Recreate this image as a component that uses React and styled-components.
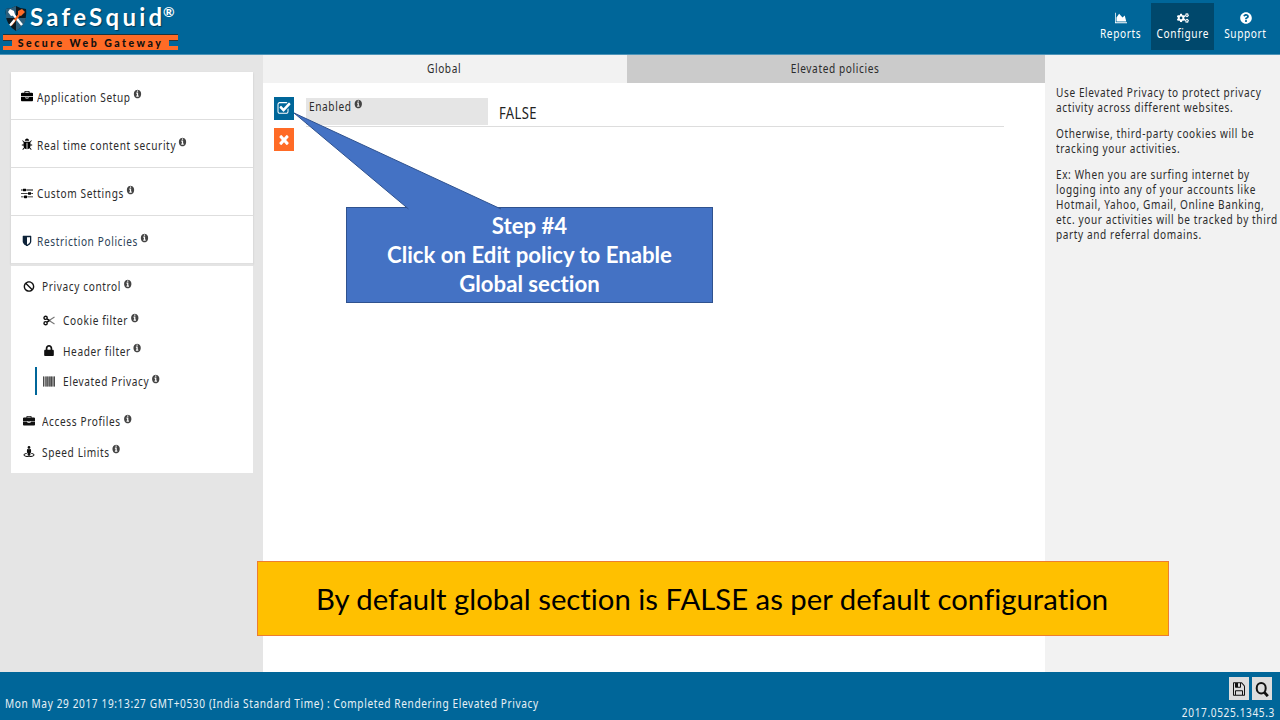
import React from "react";
import styled, { createGlobalStyle } from "styled-components";
import { FaBan, FaCogs, FaLock, FaStreetView, FaQuestionCircle } from "react-icons/fa";

const GlobalStyle = createGlobalStyle`
  * { box-sizing: border-box; }
  body { margin: 0; overflow: hidden; font-family: "Noto Sans", "Open Sans", sans-serif; color: #2b2b2b; }
  p { margin: 0; }
`;

const shapes = {
  area: [2048, "M2048 1536v128h-2048v-1536h128v1408h1920zm-384-1024l256 896h-1664v-576l448-576 576 576z"],
  briefcase: [1792, "M640 256h512v-128h-512v128zm1152 640v480q0 66-47 113t-113 47h-1472q-66 0-113-47t-47-113v-480h672v160q0 26 19 45t45 19h320q26 0 45-19t19-45v-160h672zm-768 0v128h-256v-128h256zm768-480v384h-1792v-384q0-66 47-113t113-47h352v-160q0-40 28-68t68-28h576q40 0 68 28t28 68v160h352q66 0 113 47t47 113z"],
  bug: [1792, "M1696 960q0 26-19 45t-45 19h-224q0 171-67 290l208 209q19 19 19 45t-19 45q-18 19-45 19t-45-19l-198-197q-5 5-15 13t-42 28.5-65 36.5-82 29-97 13v-896h-128v896q-51 0-101.5-13.5t-87-33-66-39-43.5-32.5l-15-14-183 207q-20 21-48 21-24 0-43-16-19-18-20.5-44.5t15.5-46.5l202-227q-58-114-58-274h-224q-26 0-45-19t-19-45 19-45 45-19h224v-294l-173-173q-19-19-19-45t19-45 45-19 45 19l173 173h844l173-173q19-19 45-19t45 19 19 45-19 45l-173 173v294h224q26 0 45 19t19 45zm-480-576h-640q0-133 93.5-226.5t226.5-93.5 226.5 93.5 93.5 226.5z"],
  sliders: [1536, "M352 1408v128h-352v-128h352zm352-128q26 0 45 19t19 45v256q0 26-19 45t-45 19h-256q-26 0-45-19t-19-45v-256q0-26 19-45t45-19h256zm160-384v128h-864v-128h864zm-640-512v128h-224v-128h224zm1312 1024v128h-736v-128h736zm-960-1152q26 0 45 19t19 45v256q0 26-19 45t-45 19h-256q-26 0-45-19t-19-45v-256q0-26 19-45t45-19h256zm640 512q26 0 45 19t19 45v256q0 26-19 45t-45 19h-256q-26 0-45-19t-19-45v-256q0-26 19-45t45-19h256zm320 128v128h-224v-128h224zm0-512v128h-864v-128h864z"],
  shield: [1792, "M1344 960v-640h-448v1137q119-63 213-137 235-184 235-360zm192-768v768q0 86-33.5 170.5t-83 150-118 127.5-126.5 103-121 77.5-89.5 49.5-42.5 20q-12 6-26 6t-26-6q-16-7-42.5-20t-89.5-49.5-121-77.5-126.5-103-118-127.5-83-150-33.5-170.5v-768q0-26 19-45t45-19h1152q26 0 45 19t19 45z"],
  info: [1792, "M1152 1376v-160q0-14-9-23t-23-9h-96v-512q0-14-9-23t-23-9h-320q-14 0-23 9t-9 23v160q0 14 9 23t23 9h96v320h-96q-14 0-23 9t-9 23v160q0 14 9 23t23 9h448q14 0 23-9t9-23zm-128-896v-160q0-14-9-23t-23-9h-192q-14 0-23 9t-9 23v160q0 14 9 23t23 9h192q14 0 23-9t9-23zm640 416q0 209-103 385.5t-279.5 279.5-385.5 103-385.5-103-279.5-279.5-103-385.5 103-385.5 279.5-279.5 385.5-103 385.5 103 279.5 279.5 103 385.5z"],
  check: [1792, "M1472 930v318q0 119-84.5 203.5t-203.5 84.5h-832q-119 0-203.5-84.5t-84.5-203.5v-832q0-119 84.5-203.5t203.5-84.5h832q63 0 117 25 15 7 18 23 3 17-9 29l-49 49q-10 10-23 10-3 0-9-2-23-6-45-6h-832q-66 0-113 47t-47 113v832q0 66 47 113t113 47h832q66 0 113-47t47-113v-254q0-13 9-22l64-64q10-10 23-10 6 0 12 3 20 8 20 29zm231-489l-814 814q-24 24-57 24t-57-24l-430-430q-24-24-24-57t24-57l110-110q24-24 57-24t57 24l263 263 647-647q24-24 57-24t57 24l110 110q24 24 24 57t-24 57z"],
  times: [1792, "M1490 1322q0 40-28 68l-136 136q-28 28-68 28t-68-28l-294-294-294 294q-28 28-68 28t-68-28l-136-136q-28-28-28-68t28-68l294-294-294-294q-28-28-28-68t28-68l136-136q28-28 68-28t68 28l294 294 294-294q28-28 68-28t68 28l136 136q28 28 28 68t-28 68l-294 294 294 294q28 28 28 68z"],
  floppy: [1792, "M512 1536h768v-384h-768v384zm896 0h128v-896q0-14-10-38.5t-20-34.5l-281-281q-10-10-34-20t-39-10v416q0 40-28 68t-68 28h-576q-40 0-68-28t-28-68v-416h-128v1280h128v-416q0-40 28-68t68-28h832q40 0 68 28t28 68v416zm-384-928v-320q0-13-9.5-22.5t-22.5-9.5h-192q-13 0-22.5 9.5t-9.5 22.5v320q0 13 9.5 22.5t22.5 9.5h192q13 0 22.5-9.5t9.5-22.5zm640 32v928q0 40-28 68t-68 28h-1344q-40 0-68-28t-28-68v-1344q0-40 28-68t68-28h928q40 0 88 20t76 48l280 280q28 28 48 76t20 88z"],
};

const Shape = ({ name, ...rest }) => (
  <svg viewBox={`0 0 ${shapes[name][0]} 1792`} preserveAspectRatio="none" fill="currentColor" {...rest}>
    <path d={shapes[name][1]} />
  </svg>
);

const Scissors = () => (
  <svg viewBox="0 0 12 11" fill="none" stroke="currentColor">
    <circle cx="2.6" cy="2.8" r="1.6" strokeWidth="1.4" />
    <circle cx="2.6" cy="8.2" r="1.6" strokeWidth="1.4" />
    <path d="M4 3.8L7 5.8M4 7.2L7 5.2" strokeWidth="1.6" />
    <path d="M6.5 5.2L11.5 2M6.5 5.8L11.5 9" stroke="#777" strokeWidth="1.1" />
  </svg>
);

const Barcode = () => (
  <svg viewBox="0 0 12 10">
    <path d="M0 0H1V10H0zM2 0H2.6V10H2zM3.4 0H4.8V10H3.4zM5.6 0H6.8V10H5.6zM7.4 0H9V10H7.4zM9.6 0H10.2V10H9.6zM10.8 0H12V10H10.8z" fill="#444" />
    <path d="M0 0H12V10H0z" fill="#555" fillOpacity=".45" />
  </svg>
);

const Magnifier = () => (
  <svg viewBox="0 0 14 16" fill="none" stroke="#111">
    <ellipse cx="6.2" cy="7.2" rx="4.5" ry="5.2" strokeWidth="2" />
    <path d="M9.4 11.4L12.8 15.2" strokeWidth="2.8" />
  </svg>
);

const Page = styled.div`
  position: relative;
  width: 1280px;
  height: 720px;
  display: flex;
  flex-direction: column;
  background: #fff;
`;

const Header = styled.header`
  height: 55px;
  flex: none;
  display: flex;
  justify-content: space-between;
  background: #069;
  border-bottom: 1px solid #4d94b8;
  padding: 3px 3px 0 3px;
`;

const Brand = styled.div`
  width: 175px;
  display: flex;
  flex-direction: column;
  gap: 1px;
`;

const BrandTop = styled.div`
  display: flex;
  height: 30px;
  padding-left: 2px;
  color: #fff;
  > svg { margin-top: 1px; flex: none; }
`;

const BrandName = styled.span`
  width: 135px;
  margin-left: 3px;
  font: 700 24px/28px Lato, sans-serif;
  letter-spacing: 3.3px;
  text-shadow: 1px 1px 1px #013a58;
  white-space: nowrap;
`;

const Registered = styled.span`
  font: 700 14px/18px Lato, sans-serif;
  margin-left: -2px;
`;

const Ribbon = styled.div`
  height: 16px;
  background: #ff6b26;
  border-top: 1px solid #1b3540;
  display: flex;
  align-items: center;
  justify-content: space-between;
`;

const Notch = styled.i`
  width: 9px;
  height: 6px;
  background: #069;
  border-top: 1px solid #333;
`;

const RibbonText = styled.span`
  font: 900 10.5px/14px Lato, sans-serif;
  letter-spacing: 2.5px;
  color: #111;
  white-space: nowrap;
`;

const Nav = styled.nav`
  display: flex;
`;

const NavItem = styled.a`
  width: 63px;
  height: 47px;
  padding: 9px 0 0 ${(p) => p.$shift || 0}px;
  display: flex;
  flex-direction: column;
  align-items: center;
  gap: 1px;
  color: #fff;
  background: ${(p) => (p.$active ? "#00486c" : "transparent")};
  svg { width: 12px; height: 12px; flex: none; }
`;

const Squeezed = styled.span`
  display: inline-block;
  white-space: nowrap;
  font-size: ${(p) => p.$size || 13}px;
  line-height: 16px;
  letter-spacing: ${(p) => p.$gap ?? 0.8}px;
  transform: scaleX(${(p) => p.$x || 0.776});
  transform-origin: ${(p) => p.$from || "0"} 50%;
`;

const InfoMark = styled(Shape)`
  width: 11px;
  height: 10px;
  margin-left: 3px;
  color: #444;
  vertical-align: 2.5px;
`;

const Main = styled.main`
  height: 617px;
  display: flex;
`;

const Sidebar = styled.aside`
  width: 263px;
  padding: 17px 10.5px 0 10.5px;
  background: #e5e5e5;
`;

const Section = styled.div`
  height: 48px;
  padding: 2px 0 0 10.5px;
  display: flex;
  align-items: center;
  gap: 4px;
  background: #fff;
  border-bottom: 1px solid #e0e0e0;
  box-shadow: 0 1px 2px #0002;
  color: ${(p) => (p.$open ? "#2d4256" : "#2b2b2b")};
  > svg { width: 12px; height: ${(p) => p.$iconHeight}px; flex: none; color: ${(p) => (p.$open ? "#0d2238" : "#000")}; }
`;

const SubMenu = styled.div`
  height: 209px;
  padding-top: 6px;
  background: #fff;
  border-top: 2px solid #e4e4e4;
`;

const SubItem = styled.div`
  height: 28px;
  margin-left: ${(p) => (p.$deep ? 24.5 : 9)}px;
  margin-top: ${(p) => p.$top ?? 2.6}px;
  padding-left: ${(p) => (p.$deep ? 6 : 1)}px;
  border-left: 2px solid ${(p) => (p.$active ? "#069" : "transparent")};
  display: flex;
  align-items: center;
  gap: 7.5px;
  > svg { width: 12px; height: 11px; flex: none; color: #111; }
`;

const Content = styled.section`
  width: 782px;
  display: flex;
  flex-direction: column;
`;

const Tabs = styled.div`
  display: flex;
  height: 28px;
`;

const Tab = styled.div`
  width: ${(p) => p.$width}px;
  padding: 0 1px 2px 0;
  background: ${(p) => (p.$muted ? "#cbcbcb" : "#f2f2f2")};
  display: flex;
  align-items: center;
  justify-content: center;
`;

const Policy = styled.div`
  display: flex;
  padding: 14px 0 0 11px;
`;

const Actions = styled.div`
  display: flex;
  flex-direction: column;
  gap: 8px;
`;

const ActionButton = styled.button`
  width: 20px;
  height: 23px;
  padding: 0 1px 1px 0;
  border: 0;
  display: flex;
  align-items: center;
  justify-content: center;
  color: #fff;
  background: ${(p) => p.$color};
  svg { width: 14px; height: 15px; }
`;

const Field = styled.div`
  width: 698px;
  height: 30px;
  margin-left: 12px;
  display: flex;
  border-bottom: 1px solid #ddd;
`;

const FieldLabel = styled.div`
  width: 182px;
  height: 27px;
  margin-top: 1px;
  padding-left: 3px;
  background: #e5e5e5;
  display: flex;
  align-items: flex-start;
`;

const FieldValue = styled.div`
  display: flex;
  align-items: flex-start;
  padding: 8px 0 0 11px;
  color: #222;
`;

const Help = styled.aside`
  width: 235px;
  padding: 29.5px 0 0 10.5px;
  background: #f2f2f2;
  display: flex;
  flex-direction: column;
  gap: 11px;
`;

const HelpText = styled.p`
  font-size: 13px;
  line-height: 15px;
  letter-spacing: 0.8px;
  white-space: pre;
  transform: scaleX(0.772);
  transform-origin: 0 0;
`;

const Footer = styled.footer`
  height: 48px;
  background: #069;
  color: #e8f1f6;
  display: flex;
  justify-content: space-between;
  padding: 5px 5px 0;
`;

const Status = styled.div`
  display: flex;
  align-items: flex-start;
  padding-top: 18px;
`;

const Tools = styled.div`
  display: flex;
  flex-direction: column;
  align-items: flex-end;
  gap: 4px;
`;

const ToolRow = styled.div`
  display: flex;
  gap: 3px;
  margin-right: 3px;
`;

const Tool = styled.button`
  width: 20px;
  height: 23px;
  padding: 0;
  border: 0;
  background: #ddd;
  color: #111;
  display: flex;
  align-items: center;
  justify-content: center;
  svg { width: 14px; height: 16px; }
`;

const Callout = styled.div`
  position: absolute;
  left: 346px;
  top: 207px;
  width: 367px;
  height: 96px;
  padding-top: 3px;
  background: #4472c4;
  border: 1px solid #2f528f;
  color: #fff;
  text-align: center;
`;

const Pointer = styled.svg`
  position: absolute;
  left: -54px;
  top: -96px;
  width: 210px;
  height: 98px;
`;

const CalloutText = styled.p`
  font: 700 22.2px/29px Lato, sans-serif;
  font-variant-ligatures: none;
  white-space: nowrap;
`;

const Banner = styled.div`
  position: absolute;
  left: 257px;
  top: 561px;
  width: 912px;
  height: 75px;
  background: #ffc000;
  border: 1px solid #ed7d31;
  display: flex;
  align-items: center;
  justify-content: center;
  color: #000;
`;

const BannerText = styled.span`
  font: 400 29.3px/40px Lato, sans-serif;
  font-variant-ligatures: none;
  white-space: nowrap;
  transform: translateX(-1px);
`;

const Emblem = () => (
  <svg width="22" height="27" viewBox="0 0 22 27">
    <path d="M1 5Q6 5 11 2Q16 5 21 5Q23 20 11 27Q-1 20 1 5" fill="#0b1a22" />
    <path d="M1 5Q6 5 11 2V14H1zM11 14H21Q20 22 11 27z" fill="#2d5f7c" />
    <path d="M8 10L17 21" stroke="#fff" strokeWidth="2.4" />
    <path d="M3 8L5 5L9 7L10 11L6 12z" fill="#fff" />
    <path d="M14 11L6 21" stroke="#ff6b26" strokeWidth="2.2" />
    <path d="M13 7L17 5L20 8L16 12L13 11z" fill="#ff6b26" />
    <path d="M9.5 16L5 21.5" stroke="#fff" strokeWidth="2.2" />
  </svg>
);

const Label = ({ children, ...rest }) => (
  <Squeezed {...rest}>
    {children}
    <InfoMark name="info" />
  </Squeezed>
);

const sections = [
  ["briefcase", "Application Setup", 12],
  ["bug", "Real time content security", 13],
  ["sliders", "Custom Settings", 12],
  ["shield", "Restriction Policies", 12],
];

export default function App() {
  return (
    <Page>
      <GlobalStyle />
      <Header>
        <Brand>
          <BrandTop>
            <Emblem />
            <BrandName>SafeSquid</BrandName>
            <Registered>®</Registered>
          </BrandTop>
          <Ribbon>
            <Notch />
            <RibbonText>Secure Web Gateway</RibbonText>
            <Notch />
          </Ribbon>
        </Brand>
        <Nav>
          <NavItem $shift={2}><Shape name="area" /><Squeezed $from="50%">Reports</Squeezed></NavItem>
          <NavItem $active><FaCogs /><Squeezed $from="50%">Configure</Squeezed></NavItem>
          <NavItem><FaQuestionCircle /><Squeezed $from="50%">Support</Squeezed></NavItem>
        </Nav>
      </Header>
      <Main>
        <Sidebar>
          {sections.map(([icon, text, height], i) => (
            <Section key={text} $open={i === 3} $iconHeight={height}>
              <Shape name={icon} />
              <Label>{text}</Label>
            </Section>
          ))}
          <SubMenu>
            <SubItem $top={0}><FaBan /><Label>Privacy control</Label></SubItem>
            <SubItem $deep $top={6}><Scissors /><Label>Cookie filter</Label></SubItem>
            <SubItem $deep><FaLock /><Label>Header filter</Label></SubItem>
            <SubItem $deep $active><Barcode /><Label>Elevated Privacy</Label></SubItem>
            <SubItem $top={12}><Shape name="briefcase" /><Label>Access Profiles</Label></SubItem>
            <SubItem><FaStreetView /><Label>Speed Limits</Label></SubItem>
          </SubMenu>
        </Sidebar>
        <Content>
          <Tabs>
            <Tab $width={364}><Squeezed $from="50%">Global</Squeezed></Tab>
            <Tab $width={418} $muted><Squeezed $from="50%">Elevated policies</Squeezed></Tab>
          </Tabs>
          <Policy>
            <Actions>
              <ActionButton $color="#069"><Shape name="check" /></ActionButton>
              <ActionButton $color="#ff6b26"><Shape name="times" /></ActionButton>
            </Actions>
            <Field>
              <FieldLabel><Label>Enabled</Label></FieldLabel>
              <FieldValue><Squeezed $size={15.5} $gap={0.4} $x={0.84}>FALSE</Squeezed></FieldValue>
            </Field>
          </Policy>
        </Content>
        <Help>
          <HelpText>{"Use Elevated Privacy to protect privacy\nactivity across different websites."}</HelpText>
          <HelpText>{"Otherwise, third-party cookies will be\ntracking your activities."}</HelpText>
          <HelpText>{"Ex: When you are surfing internet by\nlogging into any of your accounts like\nHotmail, Yahoo, Gmail, Online Banking,\netc. your activities will be tracked by third\nparty and referral domains."}</HelpText>
        </Help>
      </Main>
      <Footer>
        <Status>
          <Squeezed>Mon May 29 2017 19:13:27 GMT+0530 (India Standard Time) : Completed Rendering Elevated Privacy</Squeezed>
        </Status>
        <Tools>
          <ToolRow>
            <Tool><Shape name="floppy" /></Tool>
            <Tool><Magnifier /></Tool>
          </ToolRow>
          <Squeezed $from="100%">2017.0525.1345.3</Squeezed>
        </Tools>
      </Footer>
      <Callout>
        <Pointer viewBox="0 0 210 98">
          <path d="M115.5 97L1 1L208 97" fill="#4472c4" stroke="#2f528f" />
        </Pointer>
        <CalloutText>Step #4</CalloutText>
        <CalloutText>Click on Edit policy to Enable</CalloutText>
        <CalloutText>Global section</CalloutText>
      </Callout>
      <Banner><BannerText>By default global section is FALSE as per default configuration</BannerText></Banner>
    </Page>
  );
}
